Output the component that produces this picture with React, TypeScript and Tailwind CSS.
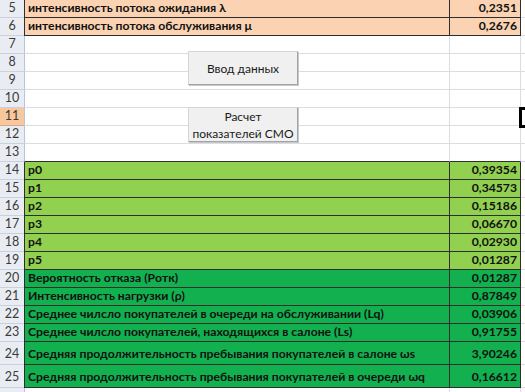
import React from 'react';

type Row = {
  n: number;
  label?: string;
  value?: string;
  fill?: 'orange' | 'lime' | 'green';
  tall?: boolean;
};

const rows: Row[] = [
  { n: 5, label: 'интенсивность потока ожидания λ', value: '0,2351', fill: 'orange' },
  { n: 6, label: 'интенсивность потока обслуживания μ', value: '0,2676', fill: 'orange' },
  { n: 7 },
  { n: 8 },
  { n: 9 },
  { n: 10 },
  { n: 11 },
  { n: 12 },
  { n: 13 },
  { n: 14, label: 'p0', value: '0,39354', fill: 'lime' },
  { n: 15, label: 'p1', value: '0,34573', fill: 'lime' },
  { n: 16, label: 'p2', value: '0,15186', fill: 'lime' },
  { n: 17, label: 'p3', value: '0,06670', fill: 'lime' },
  { n: 18, label: 'p4', value: '0,02930', fill: 'lime' },
  { n: 19, label: 'p5', value: '0,01287', fill: 'lime' },
  { n: 20, label: 'Вероятность отказа (Pотк)', value: '0,01287', fill: 'green' },
  { n: 21, label: 'Интенсивность нагрузки (ρ)', value: '0,87849', fill: 'green' },
  { n: 22, label: 'Среднее чилсло покупателей в очереди на обслуживании (Lq)', value: '0,03906', fill: 'green' },
  { n: 23, label: 'Среднее чилсло покупателей, находящихся в салоне (Ls)', value: '0,91755', fill: 'green' },
  { n: 24, label: 'Средняя продолжительность пребывания покупателей в салоне ωs', value: '3,90246', fill: 'green', tall: true },
  { n: 25, label: 'Средняя продолжительность пребывания покупателей в очереди ωq', value: '0,16612', fill: 'green', tall: true },
];

const fillClass = {
  orange: 'bg-[#fbd3b2]',
  lime: 'bg-[#92d050]',
  green: 'bg-[#12b04f]',
};

const SheetRow = ({ row }: { row: Row }) => {
  const colored = !!row.fill;
  const edge = row.n === 13;
  const h = row.tall ? 'h-[23px] pt-[2px]' : 'h-[18px]';
  const bg = row.fill ? fillClass[row.fill] : 'bg-white';
  const line = colored || edge ? 'border-b-[#2e2e2e]' : 'border-b-[#dadce6]';
  const active = row.n === 11;

  return (
    <div className="flex">
      <div
        className={`w-[24px] shrink-0 flex items-center justify-center border-b text-[12.5px] text-[#3a3a3a] ${h} ${
          active ? 'bg-[#f8c89c] border-[#d9a77c]' : 'bg-[#e9edf3] border-[#c9d1dc]'
        }`}
      >
        {row.n}
      </div>
      <div
        className={`w-[425px] shrink-0 flex items-center pl-[3px] border-l border-b font-bold text-[12.2px] text-[#111] whitespace-nowrap overflow-hidden ${h} ${bg} ${
          colored ? 'border-l-[#2e2e2e]' : 'border-l-[#b9c4d4]'
        } ${line}`}
      >
        {row.label}
      </div>
      <div
        className={`w-[72px] shrink-0 flex items-center justify-end pr-[3px] border-l border-r border-b font-bold text-[12.2px] text-[#111] ${h} ${bg} ${line} ${
          colored ? 'border-l-[#2e2e2e] border-r-[#2e2e2e]' : 'border-l-[#dadce6] border-r-[#dadce6]'
        }`}
      >
        {row.value}
      </div>
      <div className={`flex-1 bg-white border-b border-[#dadce6] ${h}`} />
    </div>
  );
};

const SheetButton = ({ top, h, children }: { top: string; h: string; children: React.ReactNode }) => (
  <div
    className={`absolute left-[188px] ${top} ${h} w-[110px] flex items-center justify-center text-center whitespace-nowrap leading-[17px] text-[12px] text-[#1a1a1a] bg-[#f0f0f0] border border-[#d6d6d6] border-r-[#a3a3a3] border-b-[#a3a3a3] shadow-[1px_1px_0_#c8c8c8]`}
  >
    {children}
  </div>
);

export default function App() {
  return (
    <div
      className="relative w-[525px] h-[392px] overflow-hidden bg-white"
      style={{ fontFamily: 'Lato, "Open Sans", "Liberation Sans", sans-serif' }}
    >
      {rows.map((r) => (
        <SheetRow key={r.n} row={r} />
      ))}
      <div className="flex h-[4px]">
        <div className="w-[24px] bg-[#e9edf3]" />
        <div className="w-[425px] border-l border-[#b9c4d4]" />
        <div className="w-[72px] border-x border-[#dadce6]" />
      </div>

      <SheetButton top="top-[51px]" h="h-[34px]">
        Ввод данных
      </SheetButton>
      <SheetButton top="top-[107px]" h="h-[35px]">
        <span>
          Расчет
          <br />
          показателей СМО
        </span>
      </SheetButton>

      {/* active cell frame, mostly off-screen */}
      <div className="absolute left-[519px] top-[107px] w-[20px] h-[21px] border-[3px] border-black" />
    </div>
  );
}
